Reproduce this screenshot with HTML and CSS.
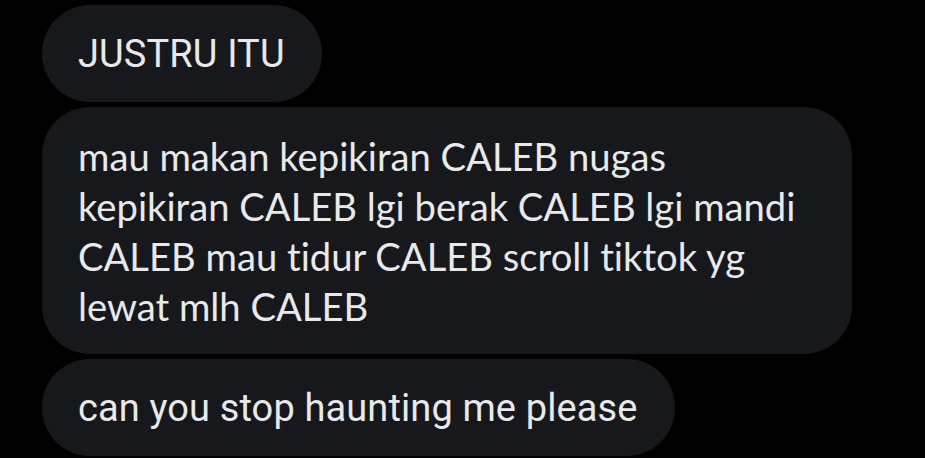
FILE: index.html
```html
<!DOCTYPE html>
<html>
<head>
<meta charset="utf-8">
<link rel="stylesheet" href="styles.css">
</head>
<body>
<div class="thread">
  <div class="bubble bubble-short">JUSTRU ITU</div>
  <div class="bubble bubble-long">mau makan kepikiran CALEB nugas kepikiran CALEB lgi berak CALEB lgi mandi CALEB mau tidur CALEB scroll tiktok yg lewat mlh CALEB</div>
  <div class="bubble bubble-short">can you stop haunting me please</div>
</div>
</body>
</html>
```
FILE: styles.css
```css
html, body {
  margin: 0;
  background: #000;
}
.thread {
  display: flex;
  flex-direction: column;
  align-items: flex-start;
  gap: 5px;
  padding: 5px 0 0 42px;
}
.bubble {
  box-sizing: border-box;
  max-width: 810px;
  background: #16181c;
  color: #e7e9ea;
  line-height: 50px;
  padding: 23.5px 37px 23.5px 36px;
  border-radius: 48px;
  font-variant-ligatures: none;
}
.bubble-short {
  font-family: Roboto, "Liberation Sans", sans-serif;
  font-size: 38px;
  letter-spacing: 0.12px;
}
.bubble-long {
  font-family: Lato, "Noto Sans", sans-serif;
  font-size: 38.2px;
}
```
